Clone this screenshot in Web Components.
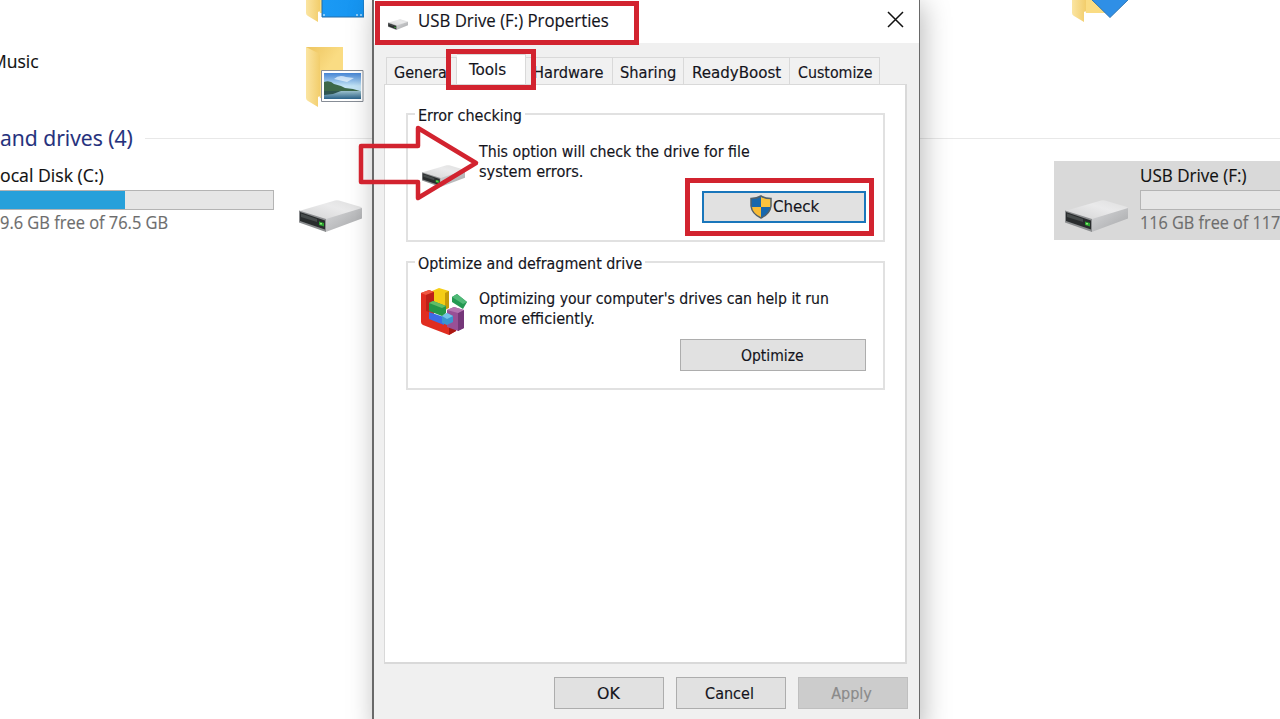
<!DOCTYPE html>
<html lang="en">
<head>
<meta charset="utf-8">
<title>USB Drive (F:) Properties</title>
<style>
html, body { margin: 0; height: 100%; overflow: hidden; background: #fff; }
body { position: relative; font-family: 'Open Sans', 'Noto Sans', sans-serif; color: #111; }
prop-dialog { position: absolute; left: 372px; top: 0; }
mark-box, mark-arrow { position: absolute; }
</style>
</head>
<body>

<file-explorer></file-explorer>
<prop-dialog></prop-dialog>

<mark-box style="left:375px;top:1px;width:264px;height:44px"></mark-box>
<mark-box style="left:446px;top:49px;width:90px;height:41px"></mark-box>
<mark-box style="left:685px;top:178px;width:189px;height:58px"></mark-box>
<mark-arrow style="left:356px;top:122px"></mark-arrow>

<script>
const define = (name, html, setup) => {
    const tpl = document.createElement('template');
    tpl.innerHTML = html;
    customElements.define(name, class extends HTMLElement {
        connectedCallback() {
            if (this.shadowRoot) return;
            this.attachShadow({ mode: 'open' }).appendChild(tpl.content.cloneNode(true));
            if (setup) setup(this, this.shadowRoot);
        }
    });
};

/* Single line of text squeezed to the width in w */
define('fit-text', `
<style>
:host { display: block; flex: none; white-space: nowrap; line-height: 20px; }
span { display: inline-block; transform-origin: 0 50%; vertical-align: top; -webkit-text-stroke: .15px currentColor; }
</style>
<span><slot></slot></span>`, (el, root) => {
    const w = +el.getAttribute('w');
    const span = root.querySelector('span');
    el.style.width = w + 'px';
    span.style.transform = `scaleX(${w / span.offsetWidth})`;
});

/* ── Icons ─────────────────────────────────────────────────────────── */

define('drive-icon', `
<style>
:host { display: block; flex: none; width: 63px; height: 32px; }
svg { display: block; width: 100%; height: 100%; }
</style>
<svg viewBox="0 0 63 32" preserveAspectRatio="none">
    <defs>
        <linearGradient id="t" x1="0" y1="1" x2="1" y2="0"><stop offset="0" stop-color="#d2d2d2"/><stop offset=".6" stop-color="#eaeaeb"/><stop offset="1" stop-color="#dedede"/></linearGradient>
        <linearGradient id="s" x1="0" y1="0" x2="1" y2="1"><stop offset="0" stop-color="#d6d7d9"/><stop offset="1" stop-color="#a6a7a9"/></linearGradient>
    </defs>
    <path d="M0 11 36 0.5Q38 0 40 .5L62 7Q63 7.500 63 9L27 20Z" fill="url(#t)"/>
    <path d="M27 19 63 8V18.500L28 31.500 26 32Z" fill="url(#s)"/>
    <path d="M0 10.500 27 19V32L0 22.500Z" fill="#8b8d8f"/>
    <path d="M1 12 26 20.500V29.500L1 21Z" fill="#292c2d"/>
    <path d="M2 13.500 18 19V22L2 17Z" fill="#464b4b"/>
    <path d="M20 21.500 25 23V26.500L20 25Z" fill="#2aa52f"/>
    <path d="M21 23H23V24.500H21Z" fill="#8fea78"/>
</svg>`);

define('folder-icon', `
<style>
:host { display: block; flex: none; width: 59px; height: 61px; }
svg { display: block; }
.pic { display: none; }
:host([kind="pictures"]) .pictures, :host([kind="desktop"]) .desktop, :host([kind="downloads"]) .downloads { display: block; }
</style>
<svg width="59" height="61" viewBox="0 0 59 61">
    <defs>
        <linearGradient id="f"><stop offset="0" stop-color="#fbe5a2"/><stop offset="1" stop-color="#f2cd6b"/></linearGradient>
        <linearGradient id="b" x2="1" y2="1"><stop offset="0" stop-color="#edc45f"/><stop offset=".5" stop-color="#fadc83"/></linearGradient>
        <linearGradient id="sky" x2="0" y2="1"><stop offset="0" stop-color="#4685d4"/><stop offset=".5" stop-color="#c3e4f6"/></linearGradient>
        <linearGradient id="sea" x2="0" y2="1"><stop offset="0" stop-color="#9cc1cd"/><stop offset="1" stop-color="#2b6288"/></linearGradient>
        <linearGradient id="d"><stop offset="0" stop-color="#1b9af5"/><stop offset="1" stop-color="#1594f0"/></linearGradient>
    </defs>
    <path d="M1 1H38V52H15Z" fill="url(#b)"/>
    <path d="M1 1 13 7Q15 8 15 10V50L13 51V61L3 55Q1 54 1 52Z" fill="url(#f)"/>
    <g class="pic pictures">
        <path d="M16.500 24.500H58V55.500H16.500Z" fill="#fff" stroke="#878d96"/>
        <path d="M19 27H56V53H19Z" fill="url(#sky)"/>
        <path d="M29 33Q34 28 41 31L49 32 42 36Z" fill="#eef8ff" opacity=".7"/>
        <path d="M19 36Q25 34 29 38L36 40 40 42 48 43 55 45V46H19Z" fill="#3d6849"/>
        <path d="M19 45H56V53H19Z" fill="url(#sea)"/>
        <path d="M19 45H36L28 48 19 49Z" fill="#2f5550"/>
    </g>
    <g class="pic desktop">
        <path d="M17 18H59V56H17Z" fill="url(#d)" stroke="#246da8"/>
        <path d="M18 54H58" stroke="#fff" stroke-dasharray="2 31 2 2 2 2" stroke-width="1"/>
    </g>
    <path class="pic downloads" d="M18 20H60V36L39 56.500 19 37Z" fill="#2f8fe6" stroke="#2c74b3"/>
</svg>`);

define('shield-icon', `
<style>:host { display: block; flex: none; } svg { display: block; }</style>
<svg width="22" height="24" viewBox="0 0 22 24">
    <clipPath id="c"><path d="M11 1Q15 3.500 21 3.500V11Q20 19 11 23 2 19 1 11V3.500Q7 3.500 11 1Z"/></clipPath>
    <g clip-path="url(#c)">
        <path d="M0 0H11V12H0Z" fill="#1767ad"/><path d="M11 0H22V12H11Z" fill="#fbc33e"/>
        <path d="M0 12H11V24H0Z" fill="#f8bb35"/><path d="M11 12H22V24H11Z" fill="#1767ad"/>
    </g>
    <path d="M11 1Q15 3.500 21 3.500V11Q20 19 11 23 2 19 1 11V3.500Q7 3.500 11 1Z" fill="none" stroke="#52606a" stroke-width="1.500"/>
</svg>`);

define('defrag-icon', `
<style>:host { display: block; flex: none; } svg { display: block; }</style>
<svg width="48" height="48" viewBox="0 0 48 48">
    <path d="M12 3 19 0 29 3V19L20 23 12 17Z" fill="#f5ce15"/>
    <path d="M25 5 29 3V20L25 22Z" fill="#c59b08"/>
    <path d="M1 5 9 2 14 4V30L36 37V43L29 47 3 37Q1 36 1 34Z" fill="#e02d20"/>
    <path d="M1 5 9 2 14 4 6 7Z" fill="#ef5740"/>
    <path d="M6 7 14 4V14L9 16V24L6 23Z" fill="#bd2018"/>
    <path d="M29 40 36 37V43L29 47Z" fill="#a91712"/>
    <path d="M27 22 34 19 44 22V40L38 43 27 39Z" fill="#985096"/>
    <path d="M38 25 44 22V40L38 43Z" fill="#753779"/>
    <path d="M27 22 34 19 44 22 38 25Z" fill="#b575b2"/>
    <path d="M9 24 24 29V37L9 31Z" fill="#3c6ce5"/>
    <path d="M22 28 27 25 33 28V34L27 37 22 35Z" fill="#3b95cf"/>
    <path d="M22 28 27 25 33 28 27 31Z" fill="#75c3e9"/>
    <path d="M9 15 13 13 26 18V25L22 28 9 23Z" fill="#249748"/>
    <path d="M9 15 13 13 26 18 22 20Z" fill="#61bd67"/>
    <path d="M32 9 37 6 47 14 43 21 32 14Z" fill="#249852"/>
    <path d="M32 9 37 6 47 14 43 16Z" fill="#50b978"/>
</svg>`);

/* ── Explorer ──────────────────────────────────────────────────────── */

define('explorer-item', `
<style>
:host { display: flex; box-sizing: border-box; height: 79px; font-size: 17.5px; }
:host([selected]) { background: #d9d9d9; }
.icon { box-sizing: border-box; width: 86px; flex: none; padding: 39px 0 0 11px; }
.icon.folder { padding: 10px 0 0 17px; }
.text { flex: 1; padding-top: 4px; }
</style>
<div class="icon"><slot name="icon"></slot></div>
<div class="text"><slot></slot></div>`, (el, root) => {
    if (el.querySelector('folder-icon')) root.querySelector('.icon').classList.add('folder');
});

define('space-bar', `
<style>
:host { display: block; box-sizing: border-box; width: 283px; height: 20px; margin: 5px 0 2px; border: 1px solid #b4b4b4; background: #e6e6e6; }
div { height: 100%; background: #26a0da; }
</style>
<div></div>`, (el, root) => {
    root.querySelector('div').style.width = (el.getAttribute('used') || 0) + '%';
});

define('file-explorer', `
<style>
:host { display: block; height: 719px; overflow: hidden; }
.grid { display: grid; grid-template-columns: repeat(4, 383px); margin-left: -95px; row-gap: 6px; }
.folders { margin-top: -49px; }
.group { display: flex; align-items: center; gap: 12px; height: 26px; margin: 10px 0; font-size: 21.5px; color: #24307c; }
.group i { flex: 1; height: 1px; margin-top: 1px; background: #e8e8e8; }
.name { padding-top: 11px; }
.cut { margin-left: 9px; }
.free { color: #6d6d6d; }
</style>
<div class="grid folders">
    <explorer-item></explorer-item>
    <explorer-item><folder-icon slot="icon" kind="desktop"></folder-icon></explorer-item>
    <explorer-item></explorer-item>
    <explorer-item><folder-icon slot="icon" kind="downloads"></folder-icon></explorer-item>
    <explorer-item><fit-text class="name" w="48">Music</fit-text></explorer-item>
    <explorer-item><folder-icon slot="icon" kind="pictures"></folder-icon></explorer-item>
</div>
<div class="group"><fit-text w="133">and drives (4)</fit-text><i></i></div>
<div class="grid">
    <explorer-item>
        <fit-text class="cut" w="104">ocal Disk (C:)</fit-text>
        <space-bar used="47.5"></space-bar>
        <fit-text class="cut free" w="168">9.6 GB free of 76.5 GB</fit-text>
    </explorer-item>
    <explorer-item><drive-icon slot="icon"></drive-icon></explorer-item>
    <explorer-item></explorer-item>
    <explorer-item selected>
        <drive-icon slot="icon"></drive-icon>
        <fit-text w="107">USB Drive (F:)</fit-text>
        <space-bar></space-bar>
        <fit-text class="free" w="140">116 GB free of 117</fit-text>
    </explorer-item>
</div>`);

/* ── Dialog ────────────────────────────────────────────────────────── */

define('push-button', `
<style>
:host { display: block; width: 110px; height: 32px; }
button { display: flex; align-items: center; justify-content: center; box-sizing: border-box; width: 100%; height: 100%; margin: 0; padding: 0; border: 1.5px solid #adadad; background: #e1e1e1; color: inherit; font: inherit; }
:host([default]) button { border: 2px solid #1976bb; }
:host([disabled]) button { background: #ccc; border-color: #bfbfbf; color: #8a8a8a; }
</style>
<button><slot></slot></button>`);

define('tab-button', `
<style>
:host { display: flex; align-items: center; box-sizing: border-box; height: 27px; padding: 3px 0 0 7px; background: #f1f1f1; border: 1px solid #d9d9d9; border-width: 1px 1px 0 0; }
:host(:first-child) { border-left-width: 1px; }
:host([active]) { height: 30px; padding: 0 0 0 12px; background: #fff; }
</style>
<slot></slot>`);

define('group-box', `
<style>
:host { display: block; }
fieldset { box-sizing: border-box; width: 479px; height: 138px; min-width: 0; margin: 0; padding: 0 17px 0 7px; border: 2px solid #e1e1e1; }
legend { padding: 0 3px; }
.row { display: flex; height: var(--row-height, 58px); }
.icon { box-sizing: border-box; width: 64px; flex: none; padding-left: 5px; }
.actions { display: flex; justify-content: flex-end; }
</style>
<fieldset>
    <legend><slot name="title"></slot></legend>
    <div class="row"><div class="icon"><slot name="icon"></slot></div><div><slot></slot></div></div>
    <div class="actions"><slot name="action"></slot></div>
</fieldset>`);

define('prop-dialog', `
<style>
:host { display: flex; flex-direction: column; box-sizing: border-box; width: 548px; height: 730px; border: solid #696969; border-width: 0 1px 0 2px; background: #f0f0f0; box-shadow: 3px 4px 26px rgba(0, 0, 0, .28); font-family: 'DejaVu Sans Condensed', 'DejaVu Sans', sans-serif; font-size: 16px; color: #14141c; }
header { display: flex; align-items: center; height: 43px; box-sizing: border-box; padding: 0 15px 3px 14px; background: #fff; font-family: 'Open Sans', 'Noto Sans', sans-serif; font-size: 17.5px; }
header drive-icon { width: 20px; height: 11px; margin: 8px 10px 0 0; }
header svg { margin: 0 0 1px auto; }
nav { display: flex; align-items: flex-end; height: 41px; padding-left: 12px; }
main { box-sizing: border-box; width: 523px; height: 580px; margin-left: 10px; padding: 19px 0 0 21px; border: 1px solid #d9d9d9; border-width: 1px 2px 2px 1px; background: #fff; }
group-box + group-box { margin-top: 10px; --row-height: 56px; }
[slot="title"] { line-height: 21px; height: 20px; padding-top: 1px; box-sizing: border-box; }
.lines { padding-top: 18px; }
.lines.opt { padding-top: 17px; }
.small { width: 43px; height: 22px; margin: 41px 0 0 2px; }
defrag-icon { margin-top: 16px; }
.check { width: 164px; margin-top: 9px; }
.optimize { width: 186px; margin-top: 11px; }
.optimize fit-text { padding-top: 1px; margin-right: 2px; }
footer { display: flex; justify-content: flex-end; gap: 12px; padding: 13px 11px 0 0; }
footer fit-text { margin-right: 3px; padding-top: 1px; }
</style>
<header>
    <drive-icon></drive-icon>
    <fit-text w="191">USB Drive (F:) Properties</fit-text>
    <svg width="17" height="17" viewBox="0 0 17 17"><path d="M1 1 16 16M16 1 1 16" stroke="#111" stroke-width="1.500"/></svg>
</header>
<nav>
    <tab-button style="width:71px"><fit-text w="57">General</fit-text></tab-button>
    <tab-button active style="width:69px"><fit-text w="37">Tools</fit-text></tab-button>
    <tab-button style="width:87px"><fit-text w="70">Hardware</fit-text></tab-button>
    <tab-button style="width:71px"><fit-text w="56">Sharing</fit-text></tab-button>
    <tab-button style="width:106px;padding-left:8px"><fit-text w="89">ReadyBoost</fit-text></tab-button>
    <tab-button style="width:90px;padding-left:8px"><fit-text w="75">Customize</fit-text></tab-button>
</nav>
<main>
    <group-box>
        <fit-text slot="title" w="104">Error checking</fit-text>
        <drive-icon slot="icon" class="small"></drive-icon>
        <div class="lines">
            <fit-text w="271">This option will check the drive for file</fit-text>
            <fit-text w="104">system errors.</fit-text>
        </div>
        <push-button slot="action" default class="check"><shield-icon></shield-icon><fit-text w="46">Check</fit-text></push-button>
    </group-box>
    <group-box>
        <fit-text slot="title" w="224">Optimize and defragment drive</fit-text>
        <defrag-icon slot="icon"></defrag-icon>
        <div class="lines opt">
            <fit-text w="350">Optimizing your computer's drives can help it run</fit-text>
            <fit-text w="116">more efficiently.</fit-text>
        </div>
        <push-button slot="action" class="optimize"><fit-text w="63">Optimize</fit-text></push-button>
    </group-box>
</main>
<footer>
    <push-button><fit-text w="23">OK</fit-text></push-button>
    <push-button><fit-text w="49">Cancel</fit-text></push-button>
    <push-button disabled><fit-text w="41">Apply</fit-text></push-button>
</footer>`);

/* ── Red markers ───────────────────────────────────────────────────── */

define('mark-box', `
<style>:host { display: block; box-sizing: border-box; border: 5px solid #d2232f; }</style>`);

define('mark-arrow', `
<style>:host { display: block; } svg { display: block; }</style>
<svg width="126" height="82" viewBox="0 0 126 82">
    <path d="M5 24H62V6L120 41 62 76V60H5Z" fill="none" stroke="#d2232f" stroke-width="4.500" stroke-linejoin="round"/>
</svg>`);
</script>
</body>
</html>
